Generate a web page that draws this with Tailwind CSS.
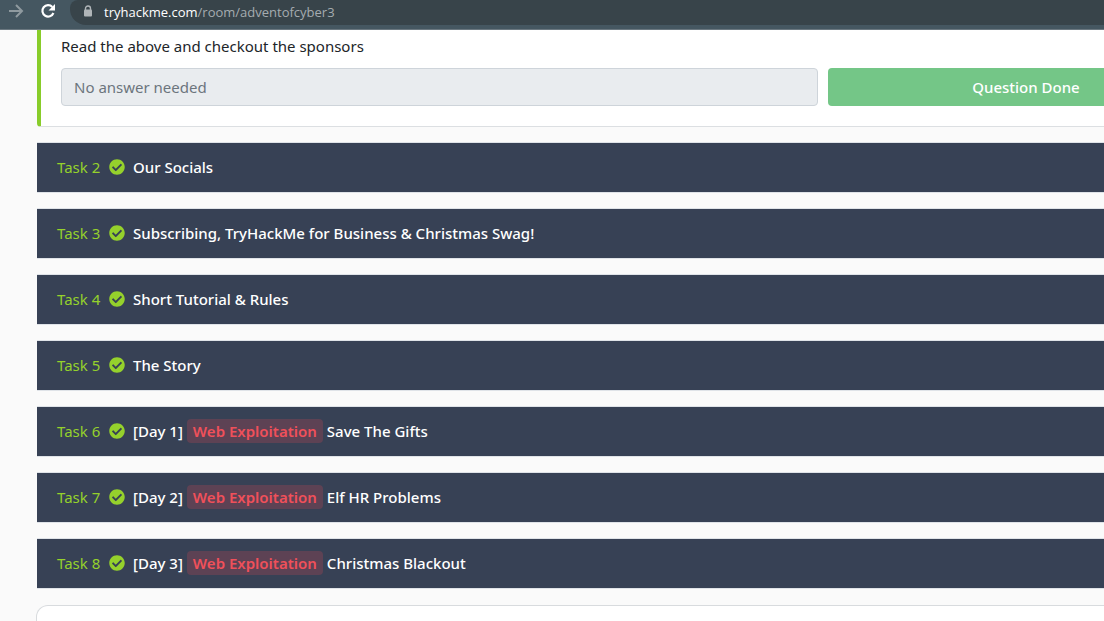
<!DOCTYPE html>
<html lang="en">
<head>
<meta charset="utf-8">
<title>TryHackMe | Advent of Cyber 3</title>
<script src="https://cdn.jsdelivr.net/npm/@tailwindcss/browser@4"></script>
</head>
<body class="bg-[#fafafa] font-['Noto_Sans',sans-serif] text-[15px] leading-6 text-[#212529] overflow-x-hidden">
<svg class="hidden" aria-hidden="true">
  <symbol id="check" viewBox="0 0 512 512"><path fill="currentColor" d="M504 256c0 136.967-111.033 248-248 248S8 392.967 8 256 119.033 8 256 8s248 111.033 248 248zM227.314 387.314l184-184c6.248-6.248 6.248-16.379 0-22.627l-22.627-22.627c-6.248-6.249-16.379-6.249-22.628 0L216 308.118l-70.059-70.059c-6.248-6.248-16.379-6.248-22.628 0l-22.627 22.627c-6.248 6.248-6.248 16.379 0 22.627l104 104c6.249 6.249 16.379 6.249 22.628.001z"/></symbol>
</svg>
<header class="flex h-[30px] items-start border-b border-[#6b7880] bg-[#455761] pl-2">
  <button aria-label="Forward" class="mt-[3px] text-[#8f9a9f]"><svg class="h-4 w-4" viewBox="0 0 16 16" fill="none" stroke="currentColor" stroke-width="2"><path d="M1 8h13M8 2l6 6-6 6"/></svg></button>
  <button aria-label="Reload" class="ml-4 mt-[3px] text-white"><svg class="h-4 w-4" viewBox="0 0 16 16"><path d="M12.300 4A5.700 5.700 0 1 0 13.400 10" fill="none" stroke="currentColor" stroke-width="2.200"/><path d="M15 1v6.500H8.500z" fill="currentColor"/></svg></button>
  <div class="ml-[14px] flex h-[25px] flex-1 items-start rounded-bl-2xl rounded-tl-lg bg-[#38444a] pl-3">
    <svg class="mt-[5px] h-3 w-3 text-[#b0b5b8]" viewBox="0 0 12 12"><path d="M3.500 5V3.500a2.500 2.500 0 0 1 5 0V5" fill="none" stroke="currentColor" stroke-width="1.400"/><rect x="2" y="4.500" width="8" height="7" rx="1" fill="currentColor"/></svg>
    <p class="ml-[10px] font-['Open_Sans',sans-serif] text-[13px] leading-6 text-[#a5acb0]"><span class="text-white">tryhackme.com</span>/room/adventofcyber3</p>
  </div>
</header>
<main class="-mr-[140px] ml-[37px]">
  <section class="rounded-bl-sm border-b border-l-4 border-b-[#dcdfe2] border-l-[#88cc2a] bg-white pt-1 pb-5 pl-5 pr-5">
    <label for="answer" class="block">Read the above and checkout the sponsors</label>
    <div class="mt-[10px] grid grid-cols-[757fr_396fr] gap-[10px]">
      <input id="answer" disabled placeholder="No answer needed" class="h-[38px] min-w-0 rounded border border-[#ced4da] bg-[#e9ecef] px-3 placeholder:text-[#6c757d]">
      <button class="h-[38px] rounded bg-[#74c687] font-medium text-white">Question Done</button>
    </div>
  </section>
  <div class="mt-[15px] flex flex-col gap-[15px]">
    <button class="flex h-[51px] items-center border-y border-[#dfe3e8] bg-[#374155] pb-[2px] pl-5 font-medium text-white"><span class="w-[52px] text-left font-normal text-[#95d12c]">Task 2</span><svg class="mr-2 h-4 w-4 text-[#95d12c]"><use href="#check"/></svg>Our Socials</button>
    <button class="flex h-[51px] items-center border-y border-[#dfe3e8] bg-[#374155] pb-[2px] pl-5 font-medium text-white"><span class="w-[52px] text-left font-normal text-[#95d12c]">Task 3</span><svg class="mr-2 h-4 w-4 text-[#95d12c]"><use href="#check"/></svg>Subscribing, TryHackMe for Business &amp; Christmas Swag!</button>
    <button class="flex h-[51px] items-center border-y border-[#dfe3e8] bg-[#374155] pb-[2px] pl-5 font-medium text-white"><span class="w-[52px] text-left font-normal text-[#95d12c]">Task 4</span><svg class="mr-2 h-4 w-4 text-[#95d12c]"><use href="#check"/></svg>Short Tutorial &amp; Rules</button>
    <button class="flex h-[51px] items-center border-y border-[#dfe3e8] bg-[#374155] pb-[2px] pl-5 font-medium text-white"><span class="w-[52px] text-left font-normal text-[#95d12c]">Task 5</span><svg class="mr-2 h-4 w-4 text-[#95d12c]"><use href="#check"/></svg>The Story</button>
    <button class="flex h-[51px] items-center border-y border-[#dfe3e8] bg-[#374155] pb-[2px] pl-5 font-medium text-white"><span class="w-[52px] text-left font-normal text-[#95d12c]">Task 6</span><svg class="mr-2 h-4 w-4 text-[#95d12c]"><use href="#check"/></svg>[Day 1]<span class="mx-1 rounded bg-[#5d4254] px-[6px] font-semibold text-[#f0505a]">Web Exploitation</span>Save The Gifts</button>
    <button class="flex h-[51px] items-center border-y border-[#dfe3e8] bg-[#374155] pb-[2px] pl-5 font-medium text-white"><span class="w-[52px] text-left font-normal text-[#95d12c]">Task 7</span><svg class="mr-2 h-4 w-4 text-[#95d12c]"><use href="#check"/></svg>[Day 2]<span class="mx-1 rounded bg-[#5d4254] px-[6px] font-semibold text-[#f0505a]">Web Exploitation</span>Elf HR Problems</button>
    <button class="flex h-[51px] items-center border-y border-[#dfe3e8] bg-[#374155] pb-[2px] pl-5 font-medium text-white"><span class="w-[52px] text-left font-normal text-[#95d12c]">Task 8</span><svg class="mr-2 h-4 w-4 text-[#95d12c]"><use href="#check"/></svg>[Day 3]<span class="mx-1 rounded bg-[#5d4254] px-[6px] font-semibold text-[#f0505a]">Web Exploitation</span>Christmas Blackout</button>
  </div>
  <section class="-ml-px mt-4 h-4 rounded-t-xl border border-b-0 border-[#d8dbde] bg-white"></section>
</main>
</body>
</html>
